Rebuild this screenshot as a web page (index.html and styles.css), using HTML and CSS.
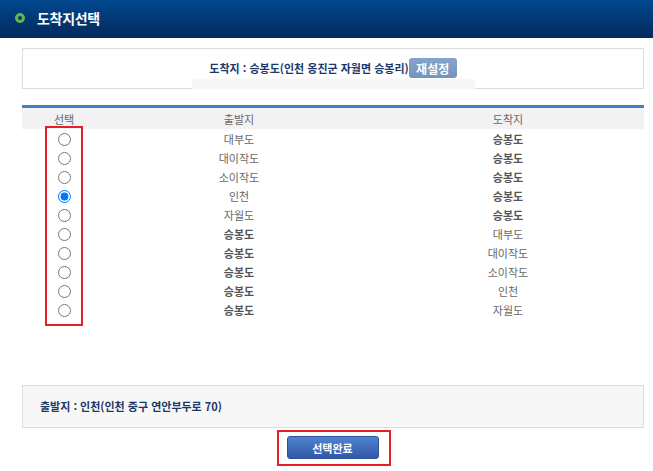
FILE: index.html
```html
<!DOCTYPE html>
<html lang="ko">
<head>
  <meta charset="UTF-8">
  <meta name="viewport" content="width=device-width, initial-scale=1.0">
  <title>도착지선택</title>
  <link rel="stylesheet" href="styles.css">
</head>
<body>
  <div class="header">
    <span class="header-icon"></span>
    <h1>도착지선택</h1>
  </div>

  <div class="content">
    <!-- 선택된 도착지 -->
    <div class="dest-box">
      <div class="dest-row">
        <span class="dest-text">도착지 : 승봉도(인천 옹진군 자월면 승봉리)</span><button class="btn-reset">재설정</button>
      </div>
      <div class="dest-bar"></div>
    </div>

    <!-- 항로 목록 -->
    <div class="route-list">
      <div class="route-row route-head">
        <span>선택</span>
        <span>출발지</span>
        <span>도착지</span>
      </div>
      <label class="route-row">
        <span><input type="radio" name="route"></span>
        <span>대부도</span>
        <span class="strong">승봉도</span>
      </label>
      <label class="route-row">
        <span><input type="radio" name="route"></span>
        <span>대이작도</span>
        <span class="strong">승봉도</span>
      </label>
      <label class="route-row">
        <span><input type="radio" name="route"></span>
        <span>소이작도</span>
        <span class="strong">승봉도</span>
      </label>
      <label class="route-row">
        <span><input type="radio" name="route" checked></span>
        <span>인천</span>
        <span class="strong">승봉도</span>
      </label>
      <label class="route-row">
        <span><input type="radio" name="route"></span>
        <span>자월도</span>
        <span class="strong">승봉도</span>
      </label>
      <label class="route-row">
        <span><input type="radio" name="route"></span>
        <span class="strong">승봉도</span>
        <span>대부도</span>
      </label>
      <label class="route-row">
        <span><input type="radio" name="route"></span>
        <span class="strong">승봉도</span>
        <span>대이작도</span>
      </label>
      <label class="route-row">
        <span><input type="radio" name="route"></span>
        <span class="strong">승봉도</span>
        <span>소이작도</span>
      </label>
      <label class="route-row">
        <span><input type="radio" name="route"></span>
        <span class="strong">승봉도</span>
        <span>인천</span>
      </label>
      <label class="route-row">
        <span><input type="radio" name="route"></span>
        <span class="strong">승봉도</span>
        <span>자월도</span>
      </label>
      <div class="mark-radios"></div>
    </div>

    <!-- 선택된 출발지 -->
    <div class="origin-box">출발지 : 인천(인천 중구 연안부두로 70)</div>

    <div class="submit-wrap">
      <div class="mark-submit">
        <button class="btn-submit">선택완료</button>
      </div>
    </div>
  </div>
</body>
</html>
```

FILE: styles.css
```css
* { margin: 0; padding: 0; box-sizing: border-box; }
body { background: #ffffff; font-family: "Noto Sans CJK KR", "Noto Sans", sans-serif; font-size: 11px; color: #666; }

.header { height: 38px; background: linear-gradient(#00488e, #04295c); display: flex; align-items: center; padding-left: 15px; }
.header-icon { width: 10px; height: 10px; border-radius: 50%; border: 3px solid #62b84e; background: #0b3365; margin-right: 12px; margin-top: -2px; }
.header h1 { color: #ffffff; font-size: 14px; font-weight: bold; line-height: 1; margin-top: -2px; letter-spacing: -0.3px; }

.content { padding: 10px 9px 0 22px; }

.dest-box { border: 1px solid #dcdcdc; padding-top: 9px; display: flex; flex-direction: column; align-items: center; }
.dest-row { height: 21px; display: flex; align-items: flex-start; }
.dest-text { font-weight: bold; color: #1c3867; line-height: 21px; }
.btn-reset { height: 20px; width: 48px; border: none; border-radius: 3px; background: linear-gradient(#85a4ca, #7394be); color: #ffffff; font-family: inherit; font-size: 12px; font-weight: bold; }
.dest-bar { width: 283px; height: 10px; background: #f7f7f7; margin-bottom: -1px; }

.route-list { position: relative; margin-top: 16px; border-top: 3px solid #4181c7; height: 280px; }
.route-row { display: grid; grid-template-columns: 84px 266px 1fr; height: 19px; align-items: center; text-align: center; }
.route-row span { display: flex; justify-content: center; align-items: center; }
.route-head { background: #f2f2f2; height: 21px; }
.route-row input { margin: 1px 0 0; width: 13px; height: 13px; }
.strong { font-weight: bold; color: #555; }

.mark-radios { position: absolute; left: 23px; top: 18px; width: 38px; height: 200px; border: 2px solid #e3202a; pointer-events: none; }

.origin-box { border: 1px solid #dcdcdc; background: #f7f7f7; height: 43px; line-height: 41px; padding-left: 17px; font-weight: bold; color: #1c3867; }

.submit-wrap { display: flex; justify-content: center; padding-left: 1px; margin-top: 2px; }
.mark-submit { border: 2px solid #e3202a; padding: 4px 10px 5px 8px; }
.btn-submit { display: block; width: 92px; height: 23px; border: 1px solid #2d519a; border-radius: 3px; background: linear-gradient(#5283cf, #3158a8); color: #ffffff; font-family: inherit; font-size: 11px; font-weight: bold; }
```
